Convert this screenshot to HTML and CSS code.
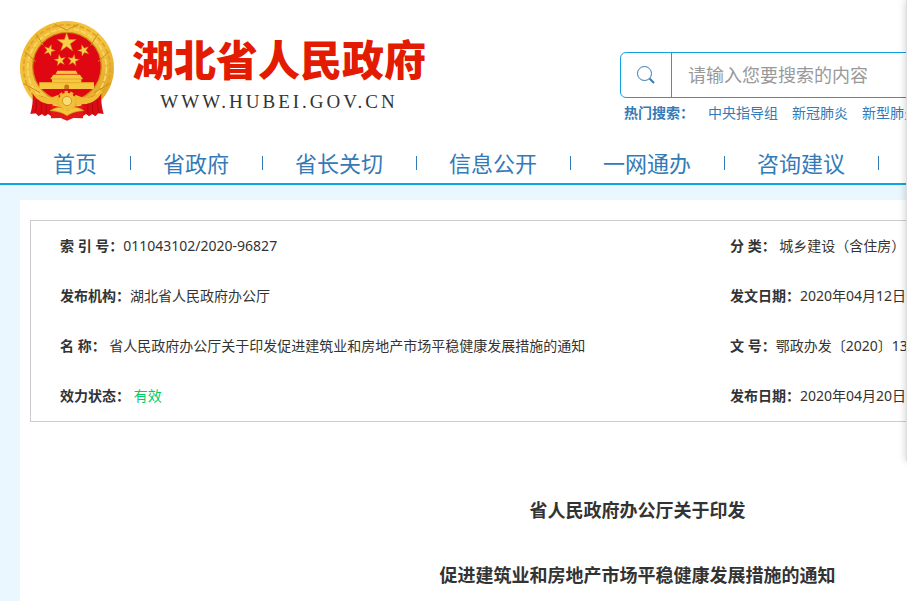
FILE: index.html
```
<!DOCTYPE html>
<html lang="zh-CN">
<head>
    <meta charset="UTF-8">
    <meta name="viewport" content="width=device-width, initial-scale=1.0">
    <title>湖北省人民政府</title>
    <link rel="stylesheet" href="styles.css">
</head>
<body>
    <header class="header">
        <div class="container header-top">
            <a class="brand" href="#">
                <svg class="emblem" viewBox="30 33 282 300" aria-hidden="true">
                    <defs>
                        <linearGradient id="gold" x1="0" y1="0" x2="1" y2="1">
                            <stop offset="0" stop-color="#eeb52c"/>
                            <stop offset="0.5" stop-color="#f4c744"/>
                            <stop offset="1" stop-color="#dc9c1c"/>
                        </linearGradient>
                        <path id="star" d="M0-1 .225-.309 .951-.309 .363.118 .588.809 0 .382-.588.809-.363.118-.951-.309-.225-.309Z"/>
                    </defs>
                    <!-- wheat ring -->
                    <circle cx="171" cy="174" r="141" fill="url(#gold)"/>
                    <circle cx="171" cy="174" r="130" fill="none" stroke="#e0a32a" stroke-width="5" stroke-dasharray="14 7"/>
                    <circle cx="171" cy="174" r="118" fill="none" stroke="#f8d768" stroke-width="5" stroke-dasharray="17 6"/>
                    <circle cx="171" cy="170" r="103" fill="#df0712" stroke="#d18a1b" stroke-width="4"/>
                    <path d="M134 43l36 17 36-17M40 220l50 28M302 220l-50 28M44 125l34 30M298 125l-34 30M78 72l22 34M264 72l-22 34" fill="none" stroke="#cf8b17" stroke-width="3"/>
                    <!-- stars -->
                    <g fill="#f8cf49" stroke="#d68418" stroke-width="0.06">
                        <use href="#star" transform="translate(170 98) scale(30)"/>
                        <use href="#star" transform="translate(118 121) rotate(20) scale(18)"/>
                        <use href="#star" transform="translate(150 151) rotate(-10) scale(18)"/>
                        <use href="#star" transform="translate(190 151) rotate(10) scale(18)"/>
                        <use href="#star" transform="translate(221 121) rotate(-20) scale(18)"/>
                    </g>
                    <!-- gate -->
                    <path d="M142 182h56l5 10h-66zM130 194h80l9 13h-98zM126 207h88v10h-88zM88 217h164v20H88z" fill="#f6c840"/>
                    <path d="M137 192h66M122 207h96M88 218h164" stroke="#dc9a22" stroke-width="2"/>
                    <path d="M163 237v-10q7-9 14 0v10z" fill="#c8761a"/>
                    <!-- ribbons and gear -->
                    <path d="M68 250l60 20-2 50-12-8-9 7-10-7-9 7-9-9-16 2q9-30 7-62zM274 250l-60 20 2 50 12-8 9 7 10-7 9 7 9-9 16 2q-9-30-7-62z" fill="#db0d13"/>
                    <path d="M122 286l49 8 49-8-1 39-29-1-19 8-19-8-29 1z" fill="#e01a18"/>
                    <path d="M80 270q0 22-5 40M94 276q2 20-2 38M108 278q2 20 0 34M262 270q0 22 5 40M248 276q-2 20 2 38M234 278q-2 20 0 34" fill="none" stroke="#b00a10" stroke-width="3"/>
                    <path d="M66 240q20 22 54 24l26-10v28q-56 7-80-34zM276 240q-20 22-54 24l-26-10v28q56 7 80-34z" fill="#f1bd35"/>
                    <path d="M120 302q28-18 51-5 23-13 51 5-31 1-51 15-20-14-51-15z" fill="#f5c73d" stroke="#d29020" stroke-width="2"/>
                    <circle cx="171" cy="273" r="25" fill="#f2c03a"/>
                    <circle cx="171" cy="273" r="27" fill="none" stroke="#eeb932" stroke-width="7" stroke-dasharray="10 7"/>
                    <circle cx="171" cy="273" r="14" fill="#f9dc73" stroke="#d6941e" stroke-width="3"/>
                </svg>
                <span class="brand-text">
                    <strong class="brand-name">湖北省人民政府</strong>
                    <span class="brand-url">WWW.HUBEI.GOV.CN</span>
                </span>
            </a>
            <div class="search">
                <form class="search-box">
                    <button class="search-btn" type="submit" aria-label="搜索">
                        <svg class="search-icon" viewBox="0 0 20 20" aria-hidden="true">
                            <circle cx="8.5" cy="8.5" r="7" fill="none" stroke="#337ab7" stroke-width="1"/>
                            <path d="M13.5 13.5l4.5 4.5" stroke="#337ab7" stroke-width="2"/>
                        </svg>
                    </button>
                    <input class="search-input" type="text" placeholder="请输入您要搜索的内容" aria-label="请输入您要搜索的内容">
                </form>
                <div class="hot">
                    <strong>热门搜索：</strong>
                    <a href="#">中央指导组</a>
                    <a href="#">新冠肺炎</a>
                    <a href="#">新型肺炎</a>
                </div>
            </div>
        </div>
        <nav class="container nav">
            <a href="#">首页</a>
            <a href="#">省政府</a>
            <a href="#">省长关切</a>
            <a href="#">信息公开</a>
            <a href="#">一网通办</a>
            <a href="#">咨询建议</a>
        </nav>
    </header>

    <main class="container article">
        <ul class="info">
            <li><strong>索 引 号：</strong>011043102/2020-96827</li>
            <li><strong>分 类：</strong> 城乡建设（含住房）</li>
            <li><strong>发布机构：</strong>湖北省人民政府办公厅</li>
            <li><strong>发文日期：</strong>2020年04月12日</li>
            <li><strong>名 称：</strong> 省人民政府办公厅关于印发促进建筑业和房地产市场平稳健康发展措施的通知</li>
            <li><strong>文 号：</strong>鄂政办发〔2020〕13号</li>
            <li><strong>效力状态：</strong> <span class="valid">有效</span></li>
            <li><strong>发布日期：</strong>2020年04月20日</li>
        </ul>
        <h1 class="title">省人民政府办公厅关于印发<br>促进建筑业和房地产市场平稳健康发展措施的通知</h1>
    </main>

    <aside class="side-panel"></aside>
</body>
</html>
```
FILE: styles.css
```
* {
    box-sizing: border-box;
}
body {
    margin: 0;
    min-width: 1275px;
    min-height: 100vh;
    display: flex;
    flex-direction: column;
    overflow: hidden;
    background: #eaf7fe;
    color: #333;
    font-family: "Noto Sans", "Noto Sans CJK SC", sans-serif;
    font-size: 14px;
    line-height: 20px;
}
a {
    color: #337ab7;
    text-decoration: none;
}
.container {
    width: 100%;
    padding: 0 20px;
}
.header {
    background: #fff;
    border-bottom: 2px solid #11a4dd;
}
.header-top {
    display: grid;
    grid-template-columns: 600px 1fr;
    align-items: start;
}
.brand {
    display: flex;
    align-items: center;
    gap: 18px;
    padding-top: 21px;
}
.emblem {
    width: 94px;
    height: 100px;
}
.brand-text {
    display: flex;
    flex-direction: column;
    align-items: center;
    padding-top: 12px;
}
.brand-name {
    color: #e31b00;
    font-size: 42px;
    font-weight: 900;
    line-height: 50px;
}
.brand-url {
    color: #333;
    font-family: "Liberation Serif", serif;
    font-size: 19px;
    line-height: 34px;
    letter-spacing: 3px;
}
.search {
    padding-top: 52px;
}
.search-box {
    display: flex;
    height: 46px;
    border: 1px solid #11a0e0;
    border-radius: 6px;
}
.search-btn {
    width: 51px;
    padding: 0;
    border: none;
    border-right: 1px solid #11a0e0;
    background: none;
    cursor: pointer;
}
.search-icon {
    display: block;
    width: 20px;
    height: 20px;
    margin: 0 auto;
}
.search-input {
    flex: 1;
    padding: 0 16px;
    border: none;
    outline: none;
    background: none;
    font-family: inherit;
    font-size: 18px;
}
.search-input::placeholder {
    color: #999;
}
.hot {
    display: flex;
    gap: 14px;
    padding: 5px 4px 0;
    color: #337ab7;
}
.nav {
    display: flex;
    height: 60px;
    padding-top: 19px;
    padding-left: 21px;
}
.nav a {
    display: flex;
    align-items: center;
    padding-left: 32px;
    font-size: 22px;
    line-height: 40px;
}
.nav a::after {
    content: "";
    width: 1px;
    height: 14px;
    margin-left: 33px;
    background: #337ab7;
}
.article {
    flex: 1;
    width: auto;
    margin: 15px 20px 0;
    padding: 20px 10px;
    background: #fff;
}
.info {
    display: grid;
    grid-template-columns: 670px 1fr;
    margin: 0;
    padding: 0 29px;
    border: 1px solid #ccc;
    list-style: none;
    line-height: 50px;
}
.valid {
    color: #00cc66;
}
.title {
    margin: 56px 0 0;
    font-size: 18px;
    line-height: 65px;
    text-align: center;
}
/* panel docked just past the right edge, only its shadow shows */
.side-panel {
    position: fixed;
    top: 0;
    left: calc(100% - 1px);
    width: 60px;
    height: 461px;
    background: #ddd;
    box-shadow: 0 0 8px rgba(0, 0, 0, 0.2);
}
```
